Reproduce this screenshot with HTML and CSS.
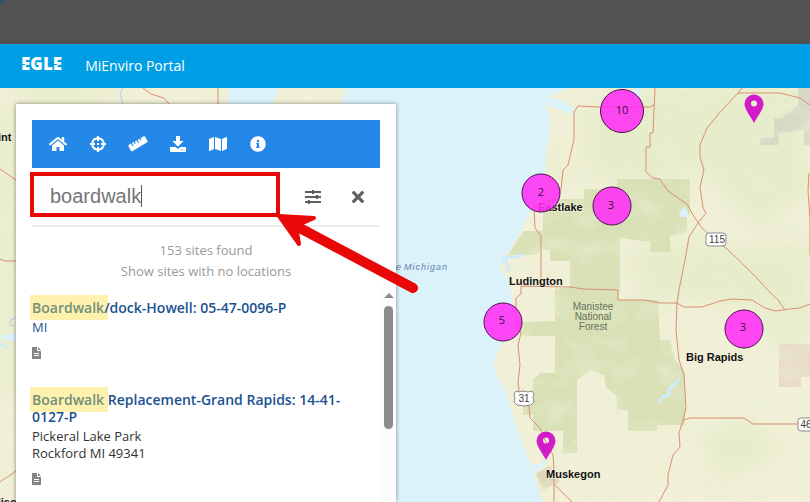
FILE: index.html
```html
<!DOCTYPE html>
<html lang="en">
<head>
<meta charset="utf-8">
<title>MiEnviro Portal</title>
<link rel="stylesheet" href="styles.css">
</head>
<body>
<div class="top-strip"></div>
<header class="site-header">
  <a class="logo" href="#">EGLE</a>
  <a class="site-name" href="#">MiEnviro Portal</a>
</header>
<main class="stage">
  <svg class="map" viewBox="0 88 810 414" preserveAspectRatio="xMinYMin slice" role="img" aria-label="Map of sites">
    <defs>
      <filter id="soft" x="-10%" y="-10%" width="120%" height="120%"><feGaussianBlur stdDeviation="9"/></filter>
      <filter id="grain" x="0" y="0" width="100%" height="100%">
        <feTurbulence type="fractalNoise" baseFrequency="0.035 0.05" numOctaves="4" seed="8"/>
        <feColorMatrix values="0 0 0 0 0.8  0 0 0 0 0.87  0 0 0 0 0.64  2.4 0 0 0 -1.05"/>
      </filter>
      <clipPath id="land">
        <path d="M0 88H229L226 120V502H0zM279 88H346L340 110H270zM570 88L556 93 546 98 546 108 551 122 549 136 546 150 546 165 544 190 528 215 520 233 510 250 501 258 500 267 508 279 512 297 514 320 503 343 495 358 494 366 497 376 507 395 517 430 530 463 543 502H810V88z"/>
      </clipPath>
      <g id="pin"><path fill-rule="evenodd" d="M0 14C-3 8-9.500 0-9.500-5A9.500 9.500 0 0 1 9.500-5C9.500 0 3 8 0 14zM0-8.500a3 3 0 1 0 0 6 3 3 0 0 0 0-6z"/></g>
    </defs>
    <rect class="water" y="88" width="810" height="414"/>
    <g clip-path="url(#land)">
      <rect class="ground" y="88" width="810" height="414"/>
      <g class="meadow" filter="url(#soft)">
        <path d="M580 110L650 88 800 88 810 190 760 230 700 170 640 185 590 180z"/>
        <path d="M630 250L680 240 740 250 810 240V320L700 300 640 300z"/>
        <path d="M20 88H120L90 106H0V400H16z"/>
        <path d="M760 320H810V345H770zM700 440L740 420 790 450 720 480zM575 180H545V150z"/>
      </g>
      <g class="forest">
        <path d="M543 199H584V189H617V179H690V215H687V232L670 236V252H650V242L620 238V287L618 300H658L660 340H670L675 360 685 372V425H657V431H628V410H617V397L606 387 604 375 590 370 577 380V453H563V431H533V415H523V405L533 393V380L540 373H555V336H521V322L555 321V289L570 287V261H550V250H543z"/>
        <path d="M524 231H543V245L536 255H508L518 240z"/>
      </g>
      <path class="reserve" d="M760 138L774 138 774 118 782 118 798 105V88H810V145H804V130L779 133 778 145H760z"/>
      <path class="pinkland" d="M779 344H810V377H801V387H779z"/>
      <path class="town" d="M536 474L550 465 560 482 543 490z"/>
      <rect y="88" width="810" height="414" filter="url(#grain)" opacity="0.55"/>
    </g>
    <g class="lake">
      <path d="M546 98L555 98 565 103 574 109 573 115 562 110 547 106zM634 88H641V97L636 95zM679 212L685 206 688 213 687 217H680zM531 465L540 464 546 459 547 463 537 472 533 471zM0 336L16 333V340L6 341z"/>
      <path class="river" d="M503 264V259L506 257H518L524 254M659 403L662 397 669 395V389L675 384 680 379M506 258L509 272M0 344L7 348"/>
      <path class="stream" d="M123 88L120 94 123 104M16 318L10 320 10 325 15 326"/>
    </g>
    <g class="roads">
      <path d="M655 88L653 133H650V147H646V172L653 178 660 179 668 191 678 198 687 204 693 215 702 228 715 240 727 249 752 273 767 289 778 300 785 310"/>
      <path d="M742 88L738 93 722 110 707 128 700 145V157L704 170 700 187 703 208 706 213 698 223 689 237 685 260 679 290 677 303 676 330 679 360 684 375 686 408 683 420 679 433 680 447 673 455 668 475V485L659 502"/>
      <path d="M738 93H780L800 98 810 105M809 173L808 190 810 220V255"/>
      <path d="M574 112L578 106 598 107H650L655 104M574 112V140L568 165 563 170 561 190 553 200 534 207 535 228 541 236V286"/>
      <path d="M541 286H521V294L516 298 516 315 521 333 518 345 520 365 518 382 520 400 529 407 530 418 540 428 545 440 553 455 554 470V502M521 286L570 287 583 289 618 290V300H645L660 303H677L684 307H702L720 301 732 299 752 300 765 308 775 311 790 309 800 308 810 304"/>
      <path d="M554 484L572 502M683 420L690 418H744L753 424H800M143 88L151 94 164 98 171 106M218 88V106M0 169L16 180M0 259L5 261H16M0 482L16 471"/>
    </g>
    <g class="shield">
      <rect x="706" y="233" width="20" height="13" rx="3"/>
      <rect x="798" y="418" width="22" height="13" rx="3"/>
      <path d="M516 391L519 392 523 391 528 392 532 391 534 394 533 398 534 402 531 405 524 406 517 405 514 402 515 398 514 394z"/>
    </g>
    <g class="road-no"><text x="717" y="243">115</text><text x="524" y="402">31</text><text x="806" y="428">46</text></g>
    <g class="water-name"><text x="396" y="270">e</text><text x="404" y="270">Michigan</text></g>
    <g class="forest-name"><text x="593" y="310">Manistee</text><text x="593" y="320">National</text><text x="593" y="330">Forest</text></g>
    <g class="city">
      <text x="538" y="211">Eastlake</text><text x="509" y="285">Ludington</text>
      <text x="686" y="361">Big Rapids</text><text x="546" y="478">Muskegon</text>
      <text x="-2" y="141">int</text><text x="-6" y="506">dison</text>
    </g>
    <g class="cluster">
      <circle cx="622" cy="111" r="21.500"/><circle cx="541" cy="193" r="19"/><circle cx="612" cy="206" r="19"/>
      <circle cx="503" cy="322" r="19"/><circle cx="744" cy="329" r="19"/>
    </g>
    <g class="cluster-no">
      <text x="622" y="114">10</text><text x="541" y="196">2</text><text x="611" y="209">3</text><text x="502" y="324">5</text><text x="743" y="331">3</text>
    </g>
    <g class="pins"><use href="#pin" x="754" y="109"/><use href="#pin" x="546" y="446"/></g>
  </svg>

  <section class="panel">
    <nav class="toolbar" aria-label="Map tools">
      <button aria-label="Home"><svg viewBox="0 0 576 512" width="18" height="16"><path d="M280.370 148.260L96 300.110V464a16 16 0 0 0 16 16l112.060-.290a16 16 0 0 0 15.920-16V368a16 16 0 0 1 16-16h64a16 16 0 0 1 16 16v95.640a16 16 0 0 0 16 16.050L464 480a16 16 0 0 0 16-16V300L295.670 148.260a12.190 12.190 0 0 0-15.300 0zM571.600 251.470L488 182.560V44.050a12 12 0 0 0-12-12h-56a12 12 0 0 0-12 12v72.610L318.470 43a48 48 0 0 0-61 0L4.340 251.470a12 12 0 0 0-1.600 16.900l25.500 31A12 12 0 0 0 45.150 301l235.220-193.740a12.190 12.190 0 0 1 15.300 0L530.900 301a12 12 0 0 0 16.900-1.600l25.500-31a12 12 0 0 0-1.700-16.930z"/></svg></button>
      <button aria-label="Locate"><svg viewBox="0 0 16 16" width="16" height="16"><path fill-rule="evenodd" d="M7 0h2v1.300A6.800 6.800 0 0 1 14.700 7H16v2h-1.300A6.800 6.800 0 0 1 9 14.700V16H7v-1.300A6.800 6.800 0 0 1 1.300 9H0V7h1.300A6.800 6.800 0 0 1 7 1.300zM7 3.300A4.900 4.900 0 0 0 3.300 7H5v2H3.300A4.900 4.900 0 0 0 7 12.700V11h2v1.700A4.900 4.900 0 0 0 12.700 9H11V7h1.700A4.900 4.900 0 0 0 9 3.300V5H7zM7 7v2h2V7z"/></svg></button>
      <button aria-label="Measure"><svg viewBox="0 0 20 16" width="20" height="16"><path d="M.8 8.900L3 7.600 4.600 10.300 5.600 9.700 4 7 5.800 6 6.900 7.900 7.900 7.300 6.800 5.400 8.600 4.400 10.200 7.100 11.200 6.500 9.600 3.800 11.400 2.800 12.500 4.700 13.500 4.100 12.400 2.200 15.700.3C16.200 0 16.700.2 17 .600L19.500 4.900C19.800 5.400 19.600 5.900 19.200 6.200L4.300 15.200C3.800 15.500 3.300 15.300 3 14.900L.4 10.200C.1 9.700.3 9.200.8 8.900z"/></svg></button>
      <button aria-label="Download"><svg viewBox="0 0 16 16" width="16" height="16"><path fill-rule="evenodd" d="M6 0h4v5h3.500L8 10.700 2.500 5H6zM0 11h5.500L8 13l2.500-2H16v5H0zM11 13.500v1h1v-1zM13.500 13.500v1h1v-1z"/></svg></button>
      <button aria-label="Basemap"><svg viewBox="0 0 576 512" width="18" height="16"><path d="M0 117.660v346.320c0 11.320 11.430 19.060 21.940 14.860L160 416V32L20.120 87.950A32 32 0 0 0 0 117.660zM192 416l192 64V96L192 32v384zM554.060 33.160L416 96v384l139.880-55.950A32 32 0 0 0 576 394.340V48.020c0-11.320-11.430-19.060-21.940-14.860z"/></svg></button>
      <button aria-label="Information"><svg viewBox="0 0 512 512" width="16" height="16"><path d="M256 8C119 8 8 119 8 256s111 248 248 248 248-111 248-248S393 8 256 8zm0 110c23.200 0 42 18.800 42 42s-18.800 42-42 42-42-18.800-42-42 18.800-42 42-42zm56 254c0 6.600-5.400 12-12 12h-88c-6.600 0-12-5.400-12-12v-24c0-6.600 5.400-12 12-12h12v-64h-12c-6.600 0-12-5.400-12-12v-24c0-6.600 5.400-12 12-12h64c6.600 0 12 5.400 12 12v100h12c6.600 0 12 5.400 12 12v24z"/></svg></button>
    </nav>
    <form class="search">
      <input type="text" aria-label="Search sites" value="boardwalk">
      <button type="button" aria-label="Filters"><svg viewBox="0 0 16 14" width="16" height="14"><path d="M0 1h7V0h2v1h7v2H9v1H7V3H0zM0 6h11V5h2v1h3v2h-3v1h-2V8H0zM0 11h3v-1h2v1h11v2H5v1H3v-1H0z"/></svg></button>
      <button type="button" aria-label="Clear search"><svg viewBox="0 80 352 352" width="12" height="12"><path d="M242.720 256l100.070-100.070c12.280-12.280 12.280-32.190 0-44.480l-22.240-22.240c-12.280-12.280-32.190-12.280-44.480 0L176 189.280 75.930 89.210c-12.280-12.280-32.190-12.280-44.480 0L9.210 111.450c-12.280 12.280-12.280 32.190 0 44.480L109.280 256 9.210 356.070c-12.280 12.280-12.280 32.190 0 44.480l22.240 22.240c12.280 12.280 32.200 12.280 44.480 0L176 322.720l100.070 100.070c12.280 12.280 32.200 12.280 44.480 0l22.240-22.240c12.280-12.280 12.280-32.190 0-44.480L242.720 256z"/></svg></button>
    </form>
    <div class="summary">
      <p>153 sites found</p>
      <a href="#">Show sites with no locations</a>
    </div>
    <div class="results">
      <ul class="sites">
        <li class="site">
          <h2><a href="#"><mark>Boardwalk</mark>/dock-Howell: 05-47-0096-P</a></h2>
          <p class="state-only">MI</p>
          <svg class="doc" viewBox="0 0 9 12" width="9" height="12" role="img" aria-label="Document"><path fill-rule="evenodd" d="M0 0h5v4h4v8H0zM6 0l3 3H6zM2 6v1h5V6zM2 8v1h5V8z"/></svg>
        </li>
        <li class="site">
          <h2><a href="#"><mark>Boardwalk</mark> Replacement-Grand Rapids: 14-41-0127-P</a></h2>
          <p>Pickeral Lake Park</p>
          <p>Rockford MI 49341</p>
          <svg class="doc" viewBox="0 0 9 12" width="9" height="12" role="img" aria-label="Document"><path fill-rule="evenodd" d="M0 0h5v4h4v8H0zM6 0l3 3H6zM2 6v1h5V6zM2 8v1h5V8z"/></svg>
        </li>
      </ul>
      <div class="scrollbar" aria-hidden="true"><i class="scroll-up"></i><i class="thumb"></i></div>
    </div>
    <svg class="callout" viewBox="16 104 410 200" width="410" height="200" aria-hidden="true">
      <path class="caret" d="M141.500 185V207"/>
      <rect x="32" y="174" width="246" height="41"/>
      <path class="shaft" d="M296 226L413 288"/>
      <path class="head" d="M279 216L314 218 296 226 299 244z"/>
    </svg>
  </section>
</main>
</body>
</html>
```
FILE: styles.css
```css
* { box-sizing: border-box; }
body {
  margin: 0;
  height: 100vh;
  display: flex;
  flex-direction: column;
  overflow: hidden;
  font: 13px/17px "Open Sans", "Noto Sans", sans-serif;
  color: #333;
  background: #2f5268;
}
p, h2, ul { margin: 0; padding: 0; }
a { color: inherit; text-decoration: none; }
button { padding: 0; border: 0; background: none; display: grid; place-items: center; }
button svg { fill: currentColor; }

.top-strip { flex: none; height: 44px; background: #525252; border-top-left-radius: 8px; }
.site-header {
  flex: none;
  height: 44px;
  display: flex;
  align-items: center;
  gap: 23px;
  padding: 0 21px 2px;
  color: #fff;
  background: #009fe5;
}
.logo {
  position: relative;
  font-size: 17px;
  font-weight: 800;
  line-height: 20px;
  padding-bottom: 2px;
}
.logo::after {
  content: "";
  position: absolute;
  left: 0;
  top: 10px;
  width: 4px;
  height: 1px;
  background: #009fe5;
  box-shadow: 32px 0 #009fe5;
}
.site-name { font-size: 14px; }

.stage { position: relative; flex: 1; min-height: 0; display: flex; padding: 16px 16px 0; }
.map { position: absolute; inset: 0; width: 100%; height: 100%; }
.water, .lake { fill: #dbf2fb; }
.ground { fill: #f2f0d8; }
.meadow { fill: #e7ecca; }
.forest { fill: #dae0b6; }
.reserve { fill: #d8d8c7; }
.pinkland { fill: #e9dcc7; }
.town { fill: #dfd8bd; }
.river { fill: none; stroke: #cfeafa; stroke-width: 3; }
.stream { fill: none; stroke: #a9d3ef; stroke-width: 1; }
.roads { fill: none; stroke: #dc8e70; stroke-width: 1; stroke-linejoin: round; }
.shield { fill: #fff; stroke: #8a8a8a; }
.map text { font-family: "Liberation Sans", Arial, sans-serif; }
.road-no { font-size: 10px; fill: #444; text-anchor: middle; }
.water-name { font-size: 9px; font-style: italic; letter-spacing: 1px; fill: #5f7fae; }
.forest-name { font-size: 10px; fill: #64715a; text-anchor: middle; }
.city { font-size: 11px; font-weight: bold; fill: #111; stroke: #f5f3dd; stroke-width: 2px; stroke-opacity: 0.6; paint-order: stroke; }
.cluster { fill: #ff2df6; fill-opacity: 0.87; stroke: #4a1050; }
.map .cluster-no { font-size: 11px; fill: #3b1040; text-anchor: middle; }
.map .cluster-no text { font-family: "Open Sans", sans-serif; }
.pins { fill: #d31bcb; }

.panel {
  position: relative;
  width: 380px;
  max-width: 100%;
  display: flex;
  flex-direction: column;
  padding-top: 16px;
  background: #fff;
  box-shadow: 0 0 4px rgba(0, 0, 0, 0.45);
}
.toolbar {
  flex: none;
  height: 48px;
  margin: 0 16px;
  padding: 0 6px;
  display: flex;
  background: #2388e7;
  color: #fff;
}
.toolbar button { width: 40px; color: inherit; }
.search {
  flex: none;
  height: 59px;
  margin: 0 16px;
  display: flex;
  border-bottom: 2px solid #ececec;
  color: #5f5f5f;
}
.search input {
  flex: 1;
  min-width: 0;
  padding: 0 0 0 18px;
  border: 0;
  outline: 0;
  background: transparent;
  font: 20px "Liberation Sans", Arial, sans-serif;
  color: #757575;
}
.search button { width: 45px; color: inherit; }
.summary {
  flex: none;
  margin: 0 16px;
  padding: 13px 0 1px;
  text-align: center;
  line-height: 21px;
  color: #999;
}
.results { flex: 1; min-height: 0; display: flex; }
.sites { flex: 1; overflow: hidden; padding: 16px 24px 0 16px; list-style: none; }
.site { margin-bottom: 32px; }
.site h2 { margin-bottom: 3px; font-size: 14px; line-height: 17px; font-weight: 600; color: #1b5290; }
.site mark {
  margin: 0 -4px 0 -2px;
  padding: 3px 4px 3px 2px;
  color: #71907a;
  background: #fef1ae;
}
.state-only { color: #1b5290; }
.doc { display: block; margin-top: 11px; fill: #858585; }
.scrollbar {
  width: 15px;
  padding-top: 10px;
  display: flex;
  flex-direction: column;
  align-items: center;
  gap: 8px;
  background: #fcfcfc;
}
.scroll-up { border: 5px solid transparent; border-top: 0; border-bottom-color: #8b8b8b; }
.thumb { width: 9px; height: 123px; border-radius: 5px; background: #8b8b8b; }

.callout { position: absolute; top: 0; left: 0; pointer-events: none; fill: none; stroke: #e90808; stroke-width: 4; }
.callout .caret { stroke: #555; stroke-width: 1; }
.callout .shaft { stroke-width: 10; stroke-linecap: round; }
.callout .head { fill: #e90808; stroke-linejoin: round; }
```
